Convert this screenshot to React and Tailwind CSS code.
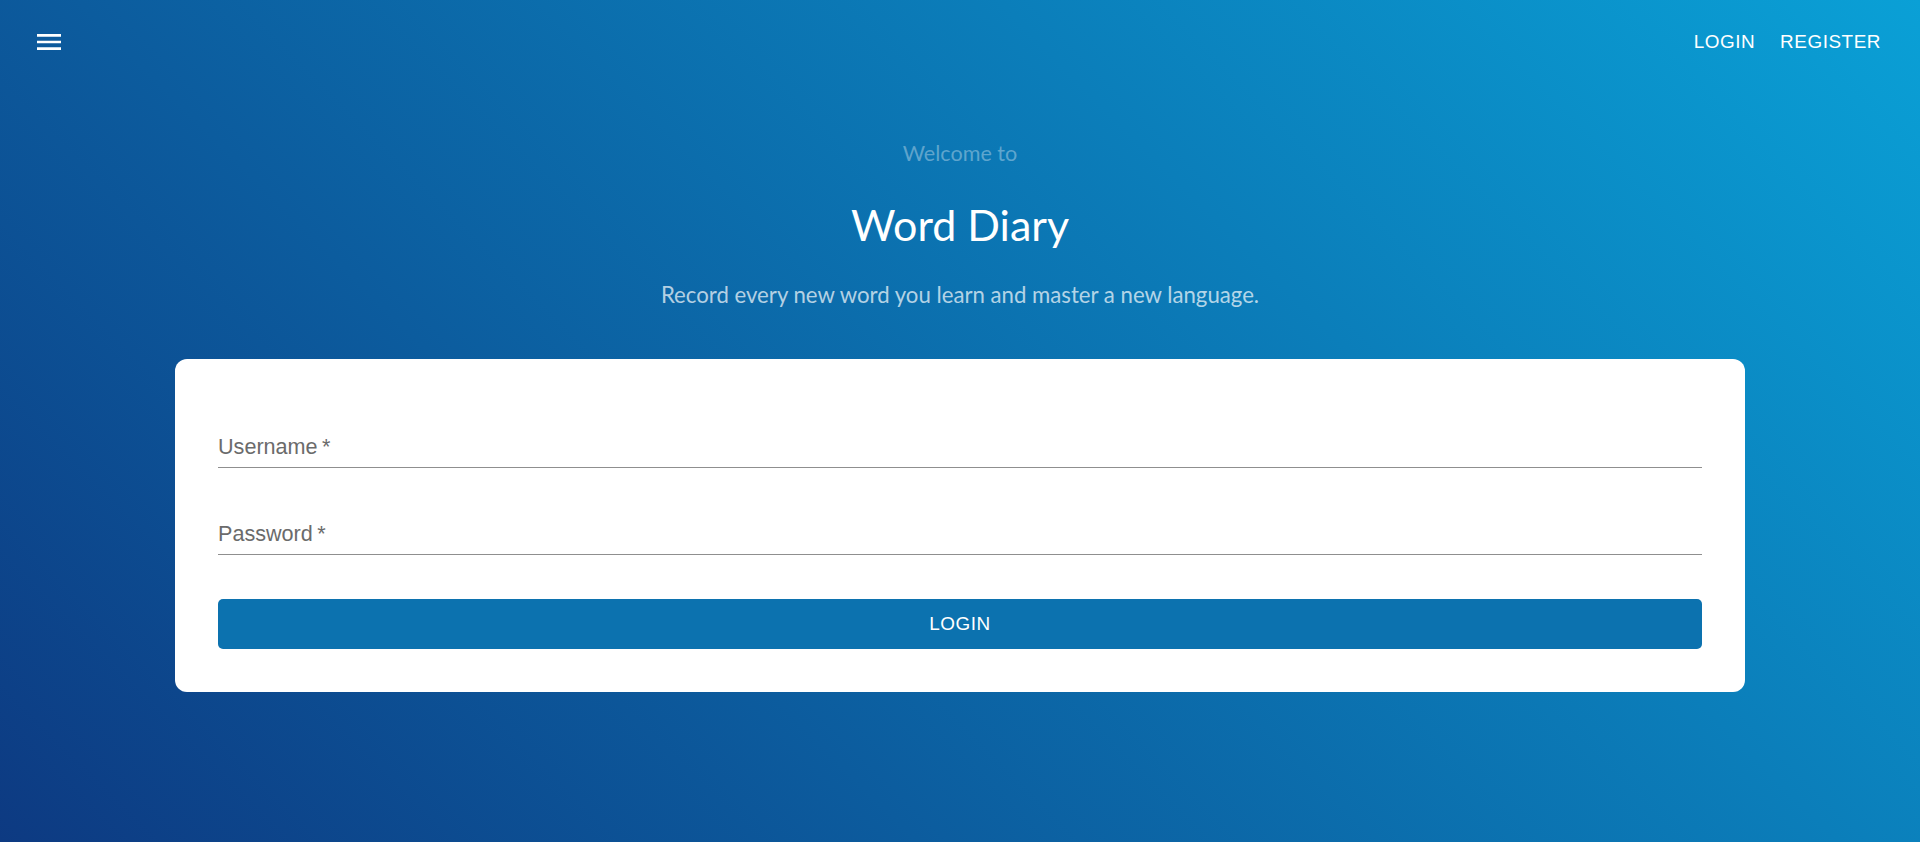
import React from "react";

function MenuIcon() {
  return (
    <svg width="32" height="32" viewBox="0 0 24 24" fill="#ffffff" aria-hidden="true">
      <path d="M3 18h18v-2H3zm0-5h18v-2H3zm0-7v2h18V6z" />
    </svg>
  );
}

function Field({ label }) {
  return (
    <div>
      <div className="text-[21.6px] leading-[25px] pb-[8px] text-[#6b6b6b] font-['Liberation_Sans',Arial,sans-serif]">
        {label}{"\u2009"}*
      </div>
      <div className="h-px bg-[#8f8f8f]" />
    </div>
  );
}

export default function App() {
  return (
    <div className="min-h-[842px] w-full bg-[linear-gradient(45deg,#0d3a82,#0aa0d6)] text-white">
      {/* top bar */}
      <header className="h-[84px] flex items-center justify-between pl-[33px] pr-[39px]">
        <MenuIcon />
        <nav className="flex items-center gap-[25px] text-[18.9px] tracking-[0.54px] uppercase font-['Liberation_Sans',Arial,sans-serif]">
          <span>Login</span>
          <span>Register</span>
        </nav>
      </header>

      {/* intro */}
      <div className="text-center font-['Lato','Noto_Sans',sans-serif]">
        <p className="mt-[54px] text-[21.6px] leading-[30px] text-white/35">Welcome to</p>
        <h1 className="mt-[29px] text-[43px] leading-[56px]">Word Diary</h1>
        <p className="mt-[27px] text-[22.2px] leading-[30px] text-white/70">
          Record every new word you learn and master a new language.
        </p>
      </div>

      {/* login card */}
      <div className="mx-[175px] mt-[49px] bg-white rounded-[12px] px-[43px] pt-[75px] pb-[43px]">
        <Field label="Username" />
        <div className="mt-[53px]">
          <Field label="Password" />
        </div>
        <button
          type="button"
          className="mt-[44px] w-full h-[50px] rounded-[5px] bg-[#0c72af] text-white text-[18.9px] tracking-[0.54px] uppercase font-['Liberation_Sans',Arial,sans-serif]"
        >
          Login
        </button>
      </div>
    </div>
  );
}
